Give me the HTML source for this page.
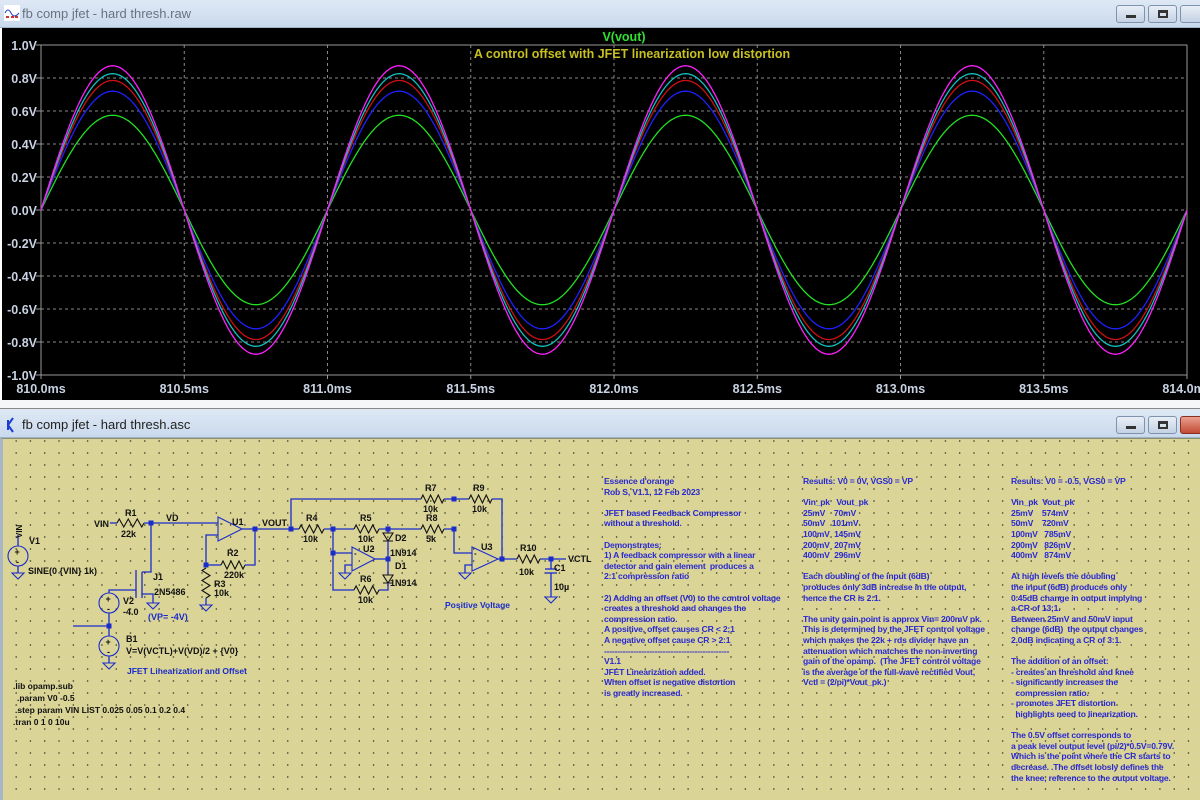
<!DOCTYPE html>
<html><head><meta charset="utf-8"><style>
*{margin:0;padding:0;box-sizing:border-box}
body{width:1200px;height:800px;overflow:hidden;background:#fff;font-family:"Liberation Sans",sans-serif;position:relative}
.tb{position:absolute;left:0;width:1200px;background:linear-gradient(#dfe9f5,#c9d9ec);border-bottom:1px solid #9fb2c8}
.tt{position:absolute;left:22px;font-size:13px;color:#6a7280}
.btn{position:absolute;width:29px;height:18px;border:1px solid #8093ad;border-radius:3px;background:linear-gradient(#e8eef6,#c4d2e4)}
.sch{position:absolute;left:0;top:438px;width:1200px;height:362px;background-color:#dad497;border-left:3px solid #a9b6c6;border-top:1px solid #8a8f70;
background-image:radial-gradient(circle,#3a3a2a 0.7px,transparent 0.9px);background-size:14.3px 12px;background-position:6px 8px}
svg text{font-family:"Liberation Sans",sans-serif}
.nt{position:absolute;font-size:8.6px;line-height:10.6px;color:#2a2ad0;font-weight:bold;white-space:pre;letter-spacing:-0.2px}
</style></head><body>
<div class="tb" style="top:0;height:28px">
<svg style="position:absolute;left:4px;top:5px" width="16" height="16"><rect x="0" y="0" width="16" height="16" fill="#fff"/><path d="M1 8 Q4 2 7 8 T15 8" stroke="#2040c0" fill="none"/><rect x="2" y="11" width="3" height="2" fill="#c33"/><rect x="7" y="11" width="3" height="2" fill="#c33"/><rect x="11" y="11" width="3" height="2" fill="#c33"/></svg>
<div class="tt" style="top:6px">fb comp jfet - hard thresh.raw</div>
<div class="btn" style="left:1116px;top:5px"><div style="position:absolute;left:9px;top:9px;width:10px;height:3px;background:#333"></div></div>
<div class="btn" style="left:1148px;top:5px"><div style="position:absolute;left:9px;top:4px;width:10px;height:8px;border:2px solid #333;border-top-width:3px"></div></div>
<div class="btn" style="left:1180px;top:5px;width:25px"></div>
</div>
<svg id="plot" style="position:absolute;left:0;top:28px" width="1200" height="372"></svg>
<div style="position:absolute;left:0;top:400px;width:1200px;height:9px;background:#f4f6f8;border-bottom:1px solid #888"></div>
<div class="tb" style="top:409px;height:29px">
<svg style="position:absolute;left:4px;top:8px" width="14" height="16"><path d="M9 1 L4 8 L9 15 M4 3 L4 13" stroke="#1a3cd0" stroke-width="2" fill="none"/></svg>
<div class="tt" style="top:8px;color:#222">fb comp jfet - hard thresh.asc</div>
<div class="btn" style="left:1116px;top:7px"><div style="position:absolute;left:9px;top:9px;width:10px;height:3px;background:#333"></div></div>
<div class="btn" style="left:1148px;top:7px"><div style="position:absolute;left:9px;top:4px;width:10px;height:8px;border:2px solid #333;border-top-width:3px"></div></div>
<div class="btn" style="left:1180px;top:7px;width:25px;background:linear-gradient(#e9a090,#c24a35);border-color:#8a3020"></div>
</div>
<div class="sch"></div>
<svg id="sc" style="position:absolute;left:0;top:0" width="1200" height="800"></svg>

<div class="nt" style="left:604px;top:476px">Essence d'orange
Rob S, V1.1, 12 Feb 2023

JFET based Feedback Compressor
without a threshold.

Demonstrates:
1) A feedback compressor with a linear
detector and gain element  produces a
2:1 compression ratio

2) Adding an offset (V0) to the control voltage
creates a threshold and changes the
compression ratio.
A positive, offset causes CR &lt; 2;1
A negative offset cause CR &gt; 2:1
-----------------------------------------------
V1.1
JFET Linearization added.
When offset is negative distortion
is greatly increased.</div>
<div class="nt" style="left:803px;top:476px">Results: V0 = 0V, VGS0 = VP

Vin_pk   Vout_pk
25mV    70mV
50mV   101mV
100mV  145mV
200mV  207mV
400mV  296mV

Each doubling of the input (6dB)
produces only 3dB increase in the output,
hence the CR is 2:1.

The unity gain point is approx Vin= 200mV pk.
This is determined by the JFET control voltage
which makes the 22k + rds divider have an
attenuation which matches the non-inverting
gain of the opamp.  (The JFET control voltage
is the average of the full-wave rectified Vout,
Vctl = (2/pi)*Vout_pk.)</div>
<div class="nt" style="left:1011px;top:476px">Results: V0 = -0.5, VGS0 = VP

Vin_pk  Vout_pk
25mV    574mV
50mV    720mV
100mV   785mV
200mV   826mV
400mV   874mV

At high levels the doubling
the input (6dB) produces only
0.45dB change in output implying
a CR of 13;1.
Between 25mV and 50mV input
change (6dB)  the output changes
2.0dB indicating a CR of 3:1.

The addition of an offset:
- creates an threshold and knee
- significantly increases the
  compression ratio.
- promotes JFET distortion
  highlights need to linearization.

The 0.5V offset corresponds to
a peak level output level (pi/2)*0.5V=0.79V.
Which is the point where the CR starts to
decrease. .The offset loosly defines the
the knee, reference to the output voltage.</div>

<script>
var NS="http://www.w3.org/2000/svg";
function el(p,t,a,txt){var e=document.createElementNS(NS,t);for(var k in a)e.setAttribute(k,a[k]);if(txt!=null)e.textContent=txt;p.appendChild(e);return e;}
var P=document.getElementById('plot');
el(P,'rect',{x:2,y:0,width:1198,height:372,fill:'#000'});
var X0=41,X1=1187,Y0=17,Y1=347,CY=182;
for(var i=1;i<8;i++){var x=X0+(X1-X0)*i/8;el(P,'line',{x1:x,y1:Y0,x2:x,y2:Y1,stroke:'#888','stroke-dasharray':'3,3'});}
for(var i=1;i<10;i++){var y=Y0+(Y1-Y0)*i/10;el(P,'line',{x1:X0,y1:y,x2:X1,y2:y,stroke:'#888','stroke-dasharray':'3,3'});}
el(P,'rect',{x:X0,y:Y0,width:X1-X0,height:Y1-Y0,fill:'none',stroke:'#999'});
var yl=['1.0V','0.8V','0.6V','0.4V','0.2V','0.0V','-0.2V','-0.4V','-0.6V','-0.8V','-1.0V'];
for(var i=0;i<=10;i++){var y=Y0+(Y1-Y0)*i/10;el(P,'text',{x:37,y:y+5,'text-anchor':'end','font-size':'12.5','font-weight':'bold',fill:'#c8d2e2'},yl[i]);el(P,'line',{x1:36,y1:y,x2:X0,y2:y,stroke:'#999'});}
var xl=['810.0ms','810.5ms','811.0ms','811.5ms','812.0ms','812.5ms','813.0ms','813.5ms','814.0ms'];
for(var i=0;i<=8;i++){var x=X0+(X1-X0)*i/8;el(P,'text',{x:x,y:365,'text-anchor':'middle','font-size':'12.5','font-weight':'bold',fill:'#c8d2e2'},xl[i]);el(P,'line',{x1:x,y1:Y1,x2:x,y2:Y1+4,stroke:'#999'});}
el(P,'text',{x:624,y:13,'text-anchor':'middle','font-size':'12.5','font-weight':'bold',fill:'#30e030'},'V(vout)');
el(P,'text',{x:632,y:30,'text-anchor':'middle','font-size':'12.5','font-weight':'bold',fill:'#c8c020'},'A control offset with JFET linearization low distortion');
var tr=[[0.574,'#22e022'],[0.72,'#2020ff'],[0.785,'#d01010'],[0.826,'#10c0c0'],[0.874,'#ff20ff']];
var sc=(Y1-Y0)/2;
tr.forEach(function(t){var d='';for(var x=X0;x<=X1;x+=1){var ph=(x-X0)/((X1-X0)/4)*2*Math.PI;d+=(x==X0?'M':'L')+x+' '+(CY-t[0]*sc*Math.sin(ph)).toFixed(1);}el(P,'path',{d:d,fill:'none',stroke:t[1],'stroke-width':1.3});});

var S=document.getElementById('sc');var B='#1a2ccc';
function w(pts){el(S,'polyline',{points:pts,fill:'none',stroke:B,'stroke-width':1.3});}
function node(x,y){el(S,'rect',{x:x-2.5,y:y-2.5,width:5,height:5,fill:B});}
function t(x,y,s,c,sz){el(S,'text',{x:x,y:y,'font-size':sz||9,'font-weight':'bold',fill:c||'#111'},s);}
function rh(x1,x2,y){var d='M'+x1+' '+y;var n=6,st=(x2-x1)/n;for(var i=0;i<n;i++){d+=' L'+(x1+st*(i+0.5))+' '+(y+(i%2?4:-4));}d+=' L'+x2+' '+y;el(S,'path',{d:d,fill:'none',stroke:'#111','stroke-width':1.1});}
function rv(x,y1,y2){var d='M'+x+' '+y1;var n=6,st=(y2-y1)/n;for(var i=0;i<n;i++){d+=' L'+(x+(i%2?4:-4))+' '+(y1+st*(i+0.5));}d+=' L'+x+' '+y2;el(S,'path',{d:d,fill:'none',stroke:'#111','stroke-width':1.1});}
function gnd(x,y){el(S,'path',{d:'M'+(x-6)+' '+y+' L'+(x+6)+' '+y+' L'+x+' '+(y+6)+' Z',fill:'none',stroke:B,'stroke-width':1.1});}
function oa(x,y,w2){el(S,'path',{d:'M'+x+' '+(y-12)+' L'+(x+w2)+' '+y+' L'+x+' '+(y+12)+' Z',fill:'none',stroke:B,'stroke-width':1.1});t(x+2,y-3,'-','#111',8);}
function src(x,y){el(S,'circle',{cx:x,cy:y,r:10,fill:'none',stroke:B,'stroke-width':1.1});t(x-3.5,y-1,'+','#111',9);t(x-2,y+9,'-','#111',9);}
function dio(x,y){el(S,'path',{d:'M'+(x-5)+' '+y+' L'+(x+5)+' '+y+' L'+x+' '+(y+8)+' Z M'+(x-5)+' '+(y+8)+' L'+(x+5)+' '+(y+8),fill:'none',stroke:'#111','stroke-width':1.1});}
// V1
src(18,556);w('18,535 18,546');w('18,566 18,573');gnd(18,573);
el(S,'text',{x:22,y:538,'font-size':8,'font-weight':'bold',fill:'#111',transform:'rotate(-90 22 538)'},'VIN');
t(29,544,'V1');t(28,574,'SINE(0 {VIN} 1k)');
// R1 / U1
t(94,527,'VIN');w('110,523 117,523');rh(117,144,523);w('144,523 218,523');node(151,523);
t(125,516,'R1');t(121,537,'22k');t(166,521,'VD');
oa(218,529,24);t(232,525,'U1');w('242,529 291,529');node(255,529);t(262,526,'VOUT');node(291,529);
w('218,535 206,535 206,565');w('206,565 221,565');rh(221,245,565);w('245,565 255,565 255,529');node(206,565);
t(227,556,'R2');t(224,578,'220k');rv(206,568,598);w('206,598 206,605');gnd(206,605);t(214,587,'R3');t(214,596,'10k');
// J1
w('151,523 151,572 142,572');w('142,572 142,598');w('136,570 136,598');w('142,594 153,594 153,603');gnd(153,603);
w('136,590 109,590 109,593');t(153,580,'J1');t(154,595,'2N5486');
src(109,603);t(123,604,'V2');t(123,615,'-4.0');t(148,620,'(VP= -4V)',B);
w('109,613 109,636');w('73,626 109,626');node(109,626);
src(109,646);w('109,656 109,663');gnd(109,663);t(126,642,'B1');t(126,654,'V=V(VCTL)+V(VD)/2 + {V0}');
t(127,674,'JFET Linearization and Offset',B,8.5);
t(13,689,'.lib opamp.sub','#111',8.5);t(17,701,'.param V0 -0.5','#111',8.5);t(15,713,'.step param VIN LIST 0.025 0.05 0.1 0.2 0.4','#111',8.5);t(13,725,'.tran 0 1 0 10u','#111',8.5);
// top path R7 R9
w('291,529 291,499 421,499');rh(421,444,499);w('444,499 469,499');node(454,499);rh(469,492,499);w('492,499 502,499 502,559');
t(425,491,'R7');t(423,512,'10k');t(473,491,'R9');t(472,512,'10k');
// R4 R5
rh(299,324,529);w('291,529 299,529');w('324,529 354,529');node(333,529);rh(354,379,529);w('379,529 421,529');node(388,529);
t(306,521,'R4');t(303,542,'10k');t(360,521,'R5');t(358,542,'10k');
// U2
w('333,529 333,590 354,590');w('333,553 352,553');node(333,553);oa(352,559,23);t(363,552,'U2');
w('352,565 345,565 345,573');gnd(345,573);w('375,559 388,559');node(388,559);
w('388,529 388,533');dio(388,533);w('388,541 388,575');dio(388,575);w('388,583 388,590 379,590');rh(354,379,590);
t(395,541,'D2');t(390,556,'1N914');t(395,569,'D1');t(390,586,'1N914');t(360,582,'R6');t(358,603,'10k');
// R8 U3
rh(421,444,529);w('444,529 454,529 454,553 472,553');node(454,529);t(426,521,'R8');t(426,542,'5k');
oa(472,559,26);t(481,550,'U3');w('472,565 465,565 465,573');gnd(465,573);
w('498,559 517,559');node(502,559);rh(517,540,559);w('540,559 566,559');node(551,559);t(568,562,'VCTL');
t(520,551,'R10');t(519,575,'10k');
w('551,559 551,569');w('545,569 557,569');w('545,573 557,573');w('551,573 551,597');gnd(551,597);t(554,571,'C1');t(554,590,'10µ');
t(445,608,'Positive Voltage',B,8.5);
</script>
</body></html>
